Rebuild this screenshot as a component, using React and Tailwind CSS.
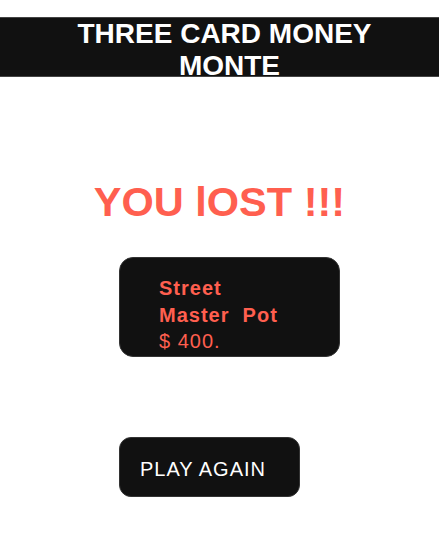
export default function App() {
  return (
    <div className="min-h-[552px] bg-white font-['Liberation_Sans',Arial,sans-serif]">
      <div className="mt-[17px] h-[60px] border-y border-[#444] bg-[#111] text-center text-[28px] font-bold leading-[32px] text-white">
        <div className="pl-[10px]">THREE CARD MONEY</div>
        <div className="pl-[20px]">MONTE</div>
      </div>
      <h1 className="mt-[101px] text-center text-[41.5px] font-bold leading-[48px] text-[#ff5f4f]">
        YOU lOST !!!
      </h1>
      <div className="pl-[119px]">
        <div className="mt-[31px] h-[100px] w-[221px] rounded-[14px] border border-[#333] bg-[#111] pl-[39px] pt-[17px] text-[20px] leading-[26.67px] tracking-[1px] text-[#ff5f4f]">
          <div className="font-bold">Street</div>
          <div className="font-bold whitespace-pre">Master  Pot</div>
          <div>$ 400.</div>
        </div>
        <button className="mt-[80px] flex h-[60px] w-[181px] items-center rounded-[12px] border border-[#333] bg-[#111] pl-[20px] pt-[5px] text-[20px] leading-[23px] tracking-[1px] text-white">
          PLAY AGAIN
        </button>
      </div>
    </div>
  );
}
